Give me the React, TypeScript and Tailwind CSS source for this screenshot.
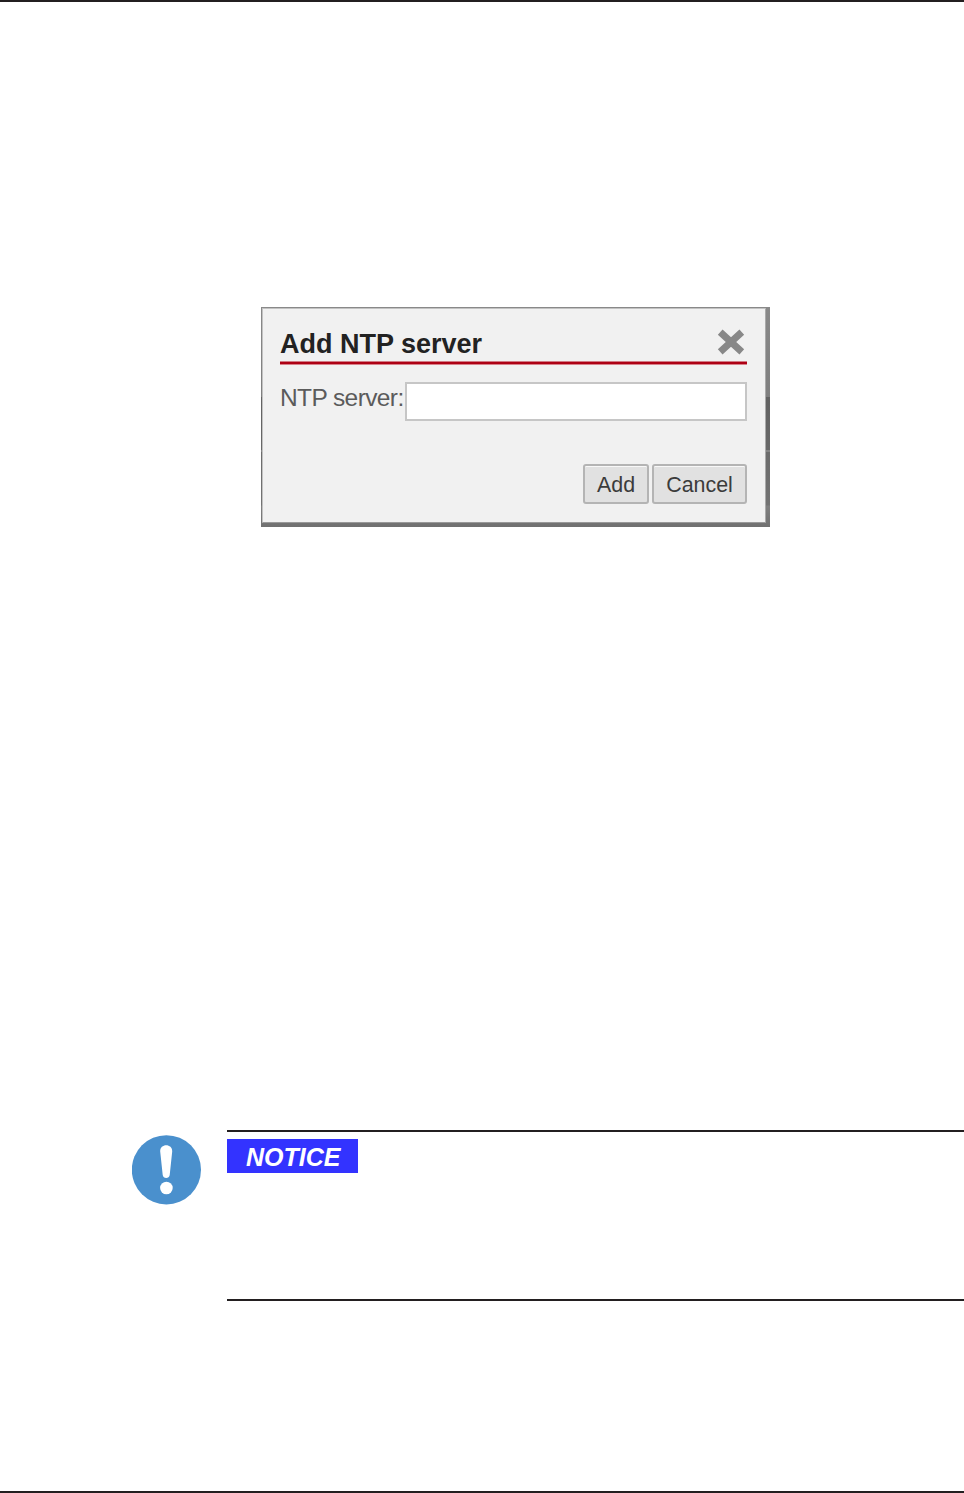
function CloseIcon() {
    return (
        <svg width="28" height="28" viewBox="0 0 28 28" fill="none" stroke="#888" strokeWidth="7">
            <path d="M3.2 3.2L24.8 22.8M24.8 3.2L3.2 22.8" />
        </svg>
    );
}

function NoticeIcon() {
    return (
        <svg width="70" height="70" viewBox="0 0 70 70">
            <circle cx="34.4" cy="34.8" r="34.6" fill="#4a90cd" />
            <path d="M28.2 16.5C27.7 8 40.7 8 40.2 16.5L37.7 40C37.3 44 31.1 44 30.7 40Z" fill="#fff" />
            <circle cx="34.4" cy="53" r="6.3" fill="#fff" />
        </svg>
    );
}

function DialogButton({ label, className }: { label: string; className: string }) {
    return (
        <button
            type="button"
            className={`h-10 rounded-[3px] border-2 border-[#b4b4b4] bg-[#e1e1e1] pt-0.5 text-[21.4px] leading-[34px] text-[#3b3b3b] shadow-[inset_0_1px_0_#f8f8f8] ${className}`}
        >
            {label}
        </button>
    );
}

function NtpDialog() {
    return (
        <div className="ml-[261px] mt-[305px] flex h-[220px] w-[509px] bg-[linear-gradient(#898989_0px,#7f7f7f_90px,#626262_90px,#686868_143px,#858585_143px,#858585_145px,#6c6c6c_145px,#737373_198px,#808080_199px,#707070_220px)] pl-px pt-px">
            <div className="h-[215px] w-[504px] border border-[#c2c2c2] border-b-[#999] border-r-[#aaa] bg-[#f1f1f1] pl-[17px] pr-[18px] pt-5">
                <div className="flex h-8 justify-between">
                    <h1 className="whitespace-nowrap text-[27px] font-bold leading-[30px] text-[#222]">Add NTP server</h1>
                    <button type="button" aria-label="Close" className="mr-0.5 h-7">
                        <CloseIcon />
                    </button>
                </div>
                <div className="h-1 border-y border-t-[#d27b85] border-b-[#d8808a] bg-[#ae0014]" />
                <div className="mt-[17px] flex">
                    <label
                        htmlFor="ntp-server"
                        className="w-[125px] whitespace-nowrap text-[24.5px] leading-[31px] tracking-[-0.6px] text-[#5b5b5b]"
                    >
                        NTP server:
                    </label>
                    <input
                        id="ntp-server"
                        className="h-[39px] w-[342px] border-2 border-[#c6c6c6] bg-white px-2 text-[22px] outline-none"
                    />
                </div>
                <div className="mt-[43px] flex justify-end gap-[3px]">
                    <DialogButton label="Add" className="w-[66px]" />
                    <DialogButton label="Cancel" className="w-[95px]" />
                </div>
            </div>
        </div>
    );
}

export default function App() {
    return (
        <main className="h-[1493px] w-[964px] overflow-hidden border-y-2 border-[#231f20] bg-white font-['Liberation_Sans',Arial,sans-serif]">
            <NtpDialog />
            <section className="mt-[603px] flex pl-[132px]">
                <div className="w-[95px] pt-[5px]">
                    <NoticeIcon />
                </div>
                <div className="h-[171px] flex-1 border-y-2 border-[#231f20] pt-[7px]">
                    <div className="h-[34px] w-[131px] bg-[#3333ff] pl-[19px] text-[25px] font-bold italic leading-9 text-white">
                        NOTICE
                    </div>
                </div>
            </section>
        </main>
    );
}
